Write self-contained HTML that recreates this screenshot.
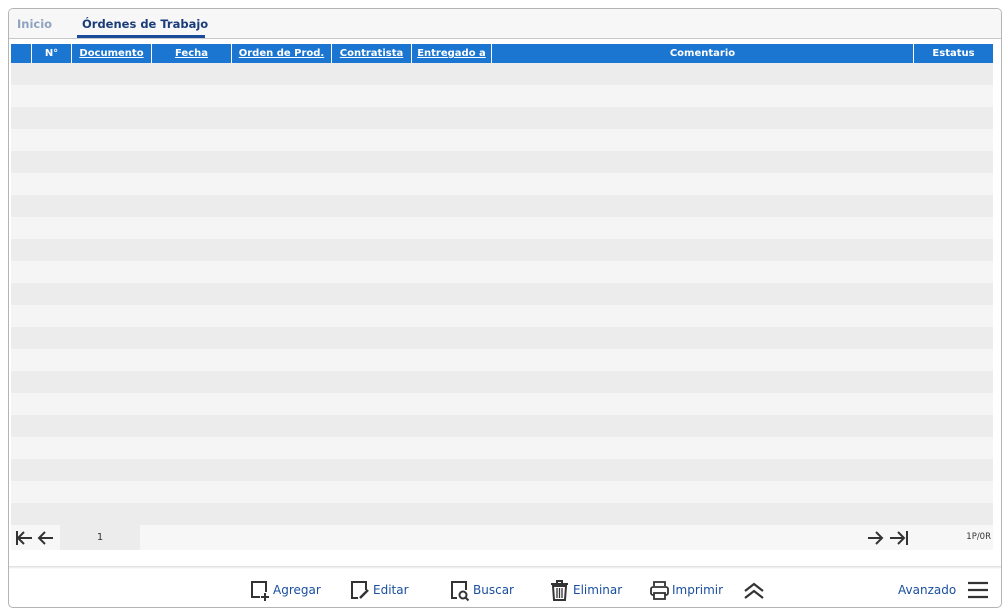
<!DOCTYPE html>
<html><head><meta charset="utf-8"><style>
*{margin:0;padding:0;box-sizing:border-box}
body{width:1006px;height:615px;background:#fff;font-family:"DejaVu Sans","Liberation Sans",sans-serif;position:relative;overflow:hidden}
.box{position:absolute;left:8px;top:8px;width:994px;height:600px;border:1px solid #b4b4b4;border-radius:5px;background:#fff;overflow:hidden}
.tabs{position:absolute;left:0;top:0;width:100%;height:30px;background:#f7f7f7;border-bottom:1px solid #c8c8c8}
.tab{position:absolute;top:8px;font-size:11.5px;font-weight:bold}
.hdr{position:absolute;left:2px;top:35px;width:982px;height:19px;background:#1b76d1}
.hdr div{position:absolute;top:0;height:19px;border-left:1px solid #fff;color:#fff;font-size:10px;font-weight:bold;text-align:center;line-height:19px;text-decoration:underline}
.row{position:absolute;left:2px;width:982px;height:22px}
.pg{position:absolute;left:2px;top:516px;width:982px;height:25px;background:#f7f7f7}
.tb{position:absolute;top:574px;font-size:12px;color:#1a4fa0}
svg{position:absolute}
</style></head><body>
<div class="box">
<div class="tabs">
<div class="tab" style="left:8px;color:#8fa3c0">Inicio</div>
<div class="tab" style="left:73px;color:#1a3d7a">Órdenes de Trabajo</div>
<div style="position:absolute;left:68px;top:26px;width:128px;height:3px;background:#1a4a9a"></div>
</div>
<div class="hdr">
<div style="left:20px;width:40px;border-left:1px solid #fff;text-decoration:none">N°</div>
<div style="left:60px;width:80px">Documento</div>
<div style="left:140px;width:80px">Fecha</div>
<div style="left:220px;width:100px">Orden de Prod.</div>
<div style="left:320px;width:80px">Contratista</div>
<div style="left:400px;width:80px">Entregado a</div>
<div style="left:480px;width:422px;text-decoration:none">Comentario</div>
<div style="left:902px;width:80px;text-decoration:none">Estatus</div>
</div>
<div id="rows"></div>
<div class="pg">
<svg style="left:4px;top:4px" width="40" height="18" viewBox="0 0 40 18"><path d="M2 2v14M3 9h14M9 3l-6 6 6 6" stroke="#333" stroke-width="2" fill="none"/><path d="M24 9h14M30 3l-6 6 6 6" stroke="#333" stroke-width="2" fill="none"/></svg>
<div style="position:absolute;left:49px;top:0;width:80px;height:25px;background:#ececec;font-size:10px;line-height:25px;text-align:center;color:#333">1</div>
<svg style="left:855px;top:4px" width="44" height="18" viewBox="0 0 44 18"><path d="M2 9h14M10 3l6 6-6 6" stroke="#333" stroke-width="2" fill="none"/><path d="M24 9h14M32 3l6 6-6 6M41 2v14" stroke="#333" stroke-width="2" fill="none"/></svg>
<div style="position:absolute;right:2px;top:7px;font-size:8.5px;color:#333">1P/0R</div>
</div>
<div style="position:absolute;left:0;top:557px;width:100%;height:3px;background:linear-gradient(#ddd,#fff)"></div>
<svg style="left:241px;top:571px" width="22" height="22"><path d="M10 17H2V2h14v10" stroke="#333" stroke-width="2" fill="none"/><path d="M15 13v8M11 17h8" stroke="#333" stroke-width="2"/></svg>
<div class="tb" style="left:264px">Agregar</div>
<svg style="left:341px;top:571px" width="22" height="22"><path d="M8 18H2V2h14v8" stroke="#333" stroke-width="2" fill="none"/><path d="M10 18l8-8" stroke="#333" stroke-width="2.5"/></svg>
<div class="tb" style="left:364px">Editar</div>
<svg style="left:441px;top:571px" width="22" height="22"><path d="M7 18H2V2h14v8" stroke="#333" stroke-width="2" fill="none"/><circle cx="13" cy="15" r="3.5" stroke="#333" stroke-width="2" fill="none"/><path d="M15.5 17.5l3 3" stroke="#333" stroke-width="2"/></svg>
<div class="tb" style="left:464px">Buscar</div>
<svg style="left:541px;top:571px" width="20" height="22"><path d="M1 4h17M7 4V1h5v3" stroke="#333" stroke-width="2" fill="none"/><path d="M3 6h13l-1 14H4z" stroke="#333" stroke-width="2" fill="none"/><path d="M7 8v10M9.5 8v10M12 8v10" stroke="#333" stroke-width="1.3"/></svg>
<div class="tb" style="left:564px">Eliminar</div>
<svg style="left:640px;top:571px" width="22" height="22"><path d="M5 6V2h11v4" stroke="#333" stroke-width="1.8" fill="none"/><rect x="2" y="7" width="17" height="8" rx="2" stroke="#333" stroke-width="1.8" fill="none"/><rect x="5" y="13" width="11" height="6" stroke="#333" stroke-width="1.8" fill="#fff"/></svg>
<div class="tb" style="left:663px">Imprimir</div>
<svg style="left:734px;top:573px" width="22" height="18"><path d="M2 9l9-7 9 7M2 16l9-7 9 7" stroke="#333" stroke-width="2.2" fill="none"/></svg>
<div class="tb" style="left:889px">Avanzado</div>
<svg style="left:958px;top:572px" width="22" height="18"><path d="M1 2h20M1 9h20M1 16h20" stroke="#333" stroke-width="2.2"/></svg>
</div>
<script>
var h='';for(var i=0;i<21;i++){h+='<div class="row" style="top:'+(54+i*22)+'px;background:'+(i%2?'#f5f5f5':'#ececec')+'"></div>';}
document.getElementById('rows').innerHTML=h;
</script>
</body></html>
